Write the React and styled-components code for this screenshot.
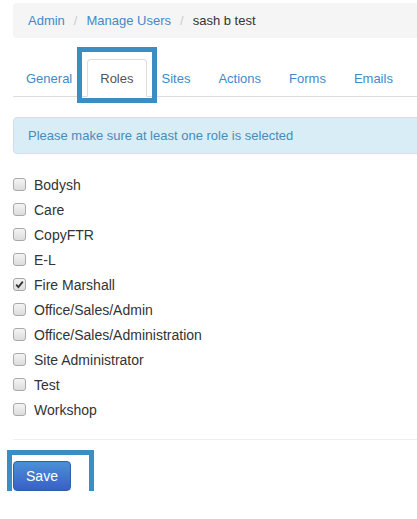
import React from "react";
import styled, { createGlobalStyle } from "styled-components";

const Global = createGlobalStyle`
  html, body { margin: 0; padding: 0; background: #fff; overflow: hidden; }
  body { font-family: "Liberation Sans", Arial, sans-serif; color: #333; }
`;

const Page = styled.div`
  width: 440px;
  padding: 3px 0 0 13px;
  box-sizing: border-box;
`;

const Breadcrumb = styled.ol`
  list-style: none;
  margin: 0;
  height: 35px;
  padding: 0 15px;
  display: flex;
  align-items: center;
  background: #f5f5f5;
  border-radius: 4px;
  font-size: 13px;
`;

const Crumb = styled.li`
  color: ${p => (p.$active ? "#333" : "#3f8acb")};
  &:not(:first-child)::before {
    content: "/";
    color: #ccc;
    padding: 0 9px 0 9px;
  }
`;

const Tabs = styled.ul`
  list-style: none;
  margin: 21px 0 0;
  padding: 0;
  display: flex;
  border-bottom: 1px solid #ddd;
  height: 37px;
  font-size: 13px;
`;

const Tab = styled.li`
  position: relative;
  margin-right: 2px;
  margin-bottom: -1px;
  padding: 0 12px;
  display: flex;
  align-items: center;
  height: 38px;
  box-sizing: border-box;
  white-space: nowrap;
  border: 1px solid ${p => (p.$active ? "#ddd" : "transparent")};
  border-bottom-color: ${p => (p.$active ? "#fff" : "transparent")};
  border-radius: 4px 4px 0 0;
  background: ${p => (p.$active ? "#fff" : "transparent")};
  color: ${p => (p.$active ? "#555" : "#3f8acb")};
`;

const Highlight = styled.span`
  position: absolute;
  left: ${p => p.$l}px;
  right: ${p => p.$r}px;
  top: ${p => p.$t}px;
  bottom: ${p => p.$b}px;
  border: 5px solid #3b8ec4;
  pointer-events: none;
`;

const Alert = styled.div`
  margin-top: 20px;
  height: 37px;
  box-sizing: border-box;
  padding: 0 14px;
  display: flex;
  align-items: center;
  background: #d9edf7;
  border: 1px solid #bce8f1;
  border-radius: 4px;
  color: #4a8bb5;
  font-size: 13px;
`;

const RoleList = styled.div`
  margin-top: 18px;
  display: flex;
  flex-direction: column;
`;

const Row = styled.label`
  height: 25px;
  display: flex;
  align-items: center;
  gap: 8px;
  font-size: 14px;
  color: #333;
`;

const Box = styled.span`
  width: 13px;
  height: 13px;
  box-sizing: border-box;
  border: 1px solid #a9a9a9;
  border-radius: 3px;
  background: linear-gradient(#f4f4f4, #dcdcdc);
  display: flex;
  align-items: center;
  justify-content: center;
`;

const Divider = styled.hr`
  margin: 17px 0 0;
  border: 0;
  border-top: 1px solid #eee;
`;

const ButtonWrap = styled.div`
  position: relative;
  margin-top: 21px;
  width: 58px;
`;

const SaveButton = styled.button`
  width: 58px;
  height: 30px;
  border: 1px solid #2f5ea8;
  border-radius: 4px;
  background: linear-gradient(#4a90d6, #3a5fc8);
  color: #fff;
  font-family: "Liberation Sans", Arial, sans-serif;
  font-size: 14px;
  padding: 0;
`;

const roles = [
  "Bodysh",
  "Care",
  "CopyFTR",
  "E-L",
  "Fire Marshall",
  "Office/Sales/Admin",
  "Office/Sales/Administration",
  "Site Administrator",
  "Test",
  "Workshop",
];

const tabs = ["General", "Roles", "Sites", "Actions", "Forms", "Emails"];

export default function App() {
  return (
    <>
      <Global />
      <Page>
        <Breadcrumb>
          <Crumb>Admin</Crumb>
          <Crumb>Manage Users</Crumb>
          <Crumb $active>sash b test</Crumb>
        </Breadcrumb>
        <Tabs>
          {tabs.map(t => (
            <Tab key={t} $active={t === "Roles"}>
              {t}
              {t === "Roles" && <Highlight $l={-11} $r={-11} $t={-13} $b={-7} />}
            </Tab>
          ))}
        </Tabs>
        <Alert>Please make sure at least one role is selected</Alert>
        <RoleList>
          {roles.map(r => (
            <Row key={r}>
              <Box>
                {r === "Fire Marshall" && (
                  <svg width="9" height="9" viewBox="0 0 9 9">
                    <path d="M1.2 4.6 L3.4 7 L7.8 1.6" fill="none" stroke="#333" strokeWidth="1.8" />
                  </svg>
                )}
              </Box>
              {r}
            </Row>
          ))}
        </RoleList>
        <Divider />
        <ButtonWrap>
          <SaveButton>Save</SaveButton>
          <Highlight $l={-6} $r={-23} $t={-11} $b={-16} />
        </ButtonWrap>
      </Page>
    </>
  );
}
